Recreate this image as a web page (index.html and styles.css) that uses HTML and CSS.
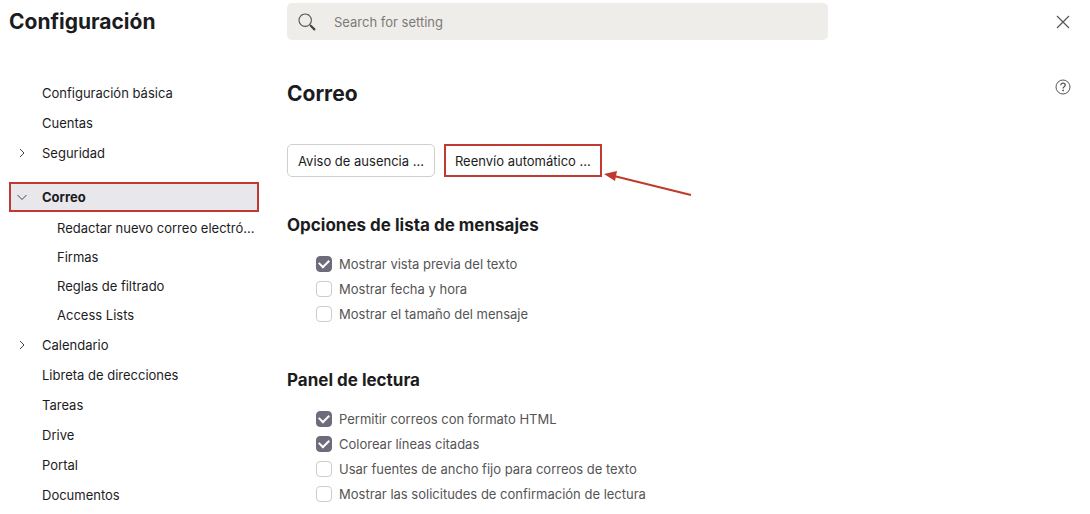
FILE: index.html
```html
<!DOCTYPE html>
<html lang="es">
<head>
  <meta charset="UTF-8">
  <meta name="viewport" content="width=device-width, initial-scale=1.0">
  <title>Configuración</title>
  <link rel="stylesheet" href="styles.css">
</head>
<body>
  <!-- Cabecera -->
  <header class="header">
    <h1 class="title">Configuración</h1>
    <div class="search">
      <svg class="search-icon" viewBox="0 0 18 18" aria-hidden="true">
        <circle cx="7.2" cy="7.2" r="6.2" fill="none" stroke="#555" stroke-width="1.1"/>
        <path d="M11.7 11.7L13 13" stroke="#555" stroke-width="1.2"/>
        <path d="M13 13L16.4 16.4" stroke="#444" stroke-width="2.2" stroke-linecap="round"/>
      </svg>
      <input type="text" class="search-input" placeholder="Search for setting" aria-label="Search for setting">
    </div>
    <button class="icon-btn" aria-label="Cerrar">
      <svg viewBox="0 0 16 16"><path d="M2 2l12 12M14 2L2 14" fill="none" stroke="#555" stroke-width="1.2"/></svg>
    </button>
  </header>

  <div class="layout">
    <!-- Menú lateral -->
    <nav class="sidebar">
      <ul class="menu">
        <li><a href="#" class="item">Configuración básica</a></li>
        <li><a href="#" class="item">Cuentas</a></li>
        <li><a href="#" class="item"><svg class="chevron" viewBox="0 0 10 10"><path d="M3 1l4 4-4 4"/></svg>Seguridad</a></li>
      </ul>
      <ul class="menu">
        <li>
          <a href="#" class="item active"><svg class="chevron" viewBox="0 0 10 10"><path d="M0.5 3L5 7.5 9.5 3"/></svg>Correo</a>
          <ul class="submenu">
            <li><a href="#" class="subitem">Redactar nuevo correo electró...</a></li>
            <li><a href="#" class="subitem">Firmas</a></li>
            <li><a href="#" class="subitem">Reglas de filtrado</a></li>
            <li><a href="#" class="subitem">Access Lists</a></li>
          </ul>
        </li>
        <li><a href="#" class="item"><svg class="chevron" viewBox="0 0 10 10"><path d="M3 1l4 4-4 4"/></svg>Calendario</a></li>
        <li><a href="#" class="item">Libreta de direcciones</a></li>
        <li><a href="#" class="item">Tareas</a></li>
        <li><a href="#" class="item">Drive</a></li>
        <li><a href="#" class="item">Portal</a></li>
        <li><a href="#" class="item">Documentos</a></li>
      </ul>
    </nav>

    <!-- Contenido -->
    <main class="content">
      <div class="content-head">
        <h2 class="title">Correo</h2>
        <button class="icon-btn" aria-label="Ayuda">
          <svg viewBox="0 0 16 16" fill="none" stroke="#555">
            <circle cx="8" cy="8" r="7"/>
            <path d="M5.8 6.3c0-1.3 1-2.1 2.2-2.1s2.2.8 2.2 2c0 1.5-2.1 1.6-2.1 3.2" stroke-width="1.3"/>
            <circle cx="8.1" cy="11.4" r=".9" fill="#555" stroke="none"/>
          </svg>
        </button>
      </div>

      <div class="actions">
        <button class="btn">Aviso de ausencia ...</button>
        <div class="marked">
          <button class="btn btn-marked">Reenvío automático ...</button>
          <svg class="arrow" viewBox="0 0 90 28" aria-hidden="true">
            <path d="M12 6L89 25" stroke="#bf3a2b" stroke-width="2"/>
            <path d="M2 4L15 1L13 11Z" fill="#bf3a2b"/>
          </svg>
        </div>
      </div>

      <fieldset class="group">
        <legend>Opciones de lista de mensajes</legend>
        <label class="check"><input type="checkbox" checked>Mostrar vista previa del texto</label>
        <label class="check"><input type="checkbox">Mostrar fecha y hora</label>
        <label class="check"><input type="checkbox">Mostrar el tamaño del mensaje</label>
      </fieldset>

      <fieldset class="group">
        <legend>Panel de lectura</legend>
        <label class="check"><input type="checkbox" checked>Permitir correos con formato HTML</label>
        <label class="check"><input type="checkbox" checked>Colorear líneas citadas</label>
        <label class="check"><input type="checkbox">Usar fuentes de ancho fijo para correos de texto</label>
        <label class="check"><input type="checkbox">Mostrar las solicitudes de confirmación de lectura</label>
      </fieldset>
    </main>
  </div>
</body>
</html>
```
FILE: styles.css
```css
* {
  box-sizing: border-box;
}
body {
  margin: 0;
  padding: 3px 19px 0 9px;
  font-family: Inter, "Liberation Sans", sans-serif;
  font-size: 13px;
  line-height: 20px;
  color: #1c1c1e;
  background: #fff;
}
button, input {
  font: inherit;
  color: inherit;
}
ul {
  list-style: none;
  margin: 0;
  padding: 0;
}
.title {
  margin: 0;
  font-size: 21px;
  line-height: 36px;
  font-weight: 700;
}
/* Cabecera */
.header {
  display: grid;
  grid-template-columns: 250px minmax(0, 541px) 1fr;
  column-gap: 28px;
  align-items: center;
}
.search {
  display: flex;
  align-items: center;
  gap: 18px;
  height: 37px;
  padding: 0 11px;
  border-radius: 5px;
  background: #efedea;
}
.search-icon {
  width: 18px;
  height: 18px;
}
.search-input {
  flex: 1;
  min-width: 0;
  padding: 0;
  border: none;
  outline: none;
  background: none;
}
.search-input::placeholder {
  color: #7c7a77;
  opacity: 1;
}
.icon-btn {
  display: block;
  width: 16px;
  height: 16px;
  margin-left: auto;
  padding: 0;
  border: none;
  background: none;
  cursor: pointer;
}
.icon-btn svg {
  display: block;
}
.layout {
  display: grid;
  grid-template-columns: 250px minmax(0, 1fr);
  column-gap: 28px;
  padding-top: 36px;
}
/* Menú lateral */
.sidebar {
  display: flex;
  flex-direction: column;
  gap: 14px;
  padding-top: 2px;
}
.item, .subitem {
  display: flex;
  align-items: center;
  height: 30px;
  padding-left: 33px;
  color: inherit;
  text-decoration: none;
}
.chevron {
  width: 10px;
  height: 10px;
  margin: 0 15px 0 -25px;
  fill: none;
  stroke: #444;
}
.active {
  font-weight: 700;
  background: #e8e7ec;
  outline: 2px solid #bf3a32;
  outline-offset: -2px;
}
.submenu {
  padding: 1px 0;
}
.subitem {
  height: 29px;
  padding-left: 48px;
  white-space: nowrap;
}
/* Contenido */
.content-head {
  display: flex;
  align-items: flex-start;
  justify-content: space-between;
}
.content-head .icon-btn {
  margin-top: 3px;
}
.actions {
  display: flex;
  gap: 9px;
  padding-top: 32px;
}
.btn {
  height: 33px;
  padding: 0 10px;
  border: 1px solid #cfcfcf;
  border-radius: 5px;
  background: #fff;
  cursor: pointer;
}
.marked {
  position: relative;
}
.btn-marked {
  padding: 0 9px;
  border: 2px solid #bf3a32;
  border-radius: 0;
}
/* Flecha sobre el botón de reenvío */
.arrow {
  position: absolute;
  left: 100%;
  top: 26px;
  width: 90px;
  height: 28px;
}
.group {
  min-width: 0;
  margin: 0;
  padding: 38px 0 6px;
  border: none;
}
.group legend {
  float: left;
  width: 100%;
  padding: 0 0 16px;
  font-size: 17px;
  line-height: 20px;
  font-weight: 700;
}
.check {
  clear: both;
  display: flex;
  align-items: center;
  gap: 7px;
  height: 25px;
  padding-left: 29px;
  color: #555;
}
.check input {
  appearance: none;
  width: 16px;
  height: 16px;
  margin: 0;
  border: 1px solid #ccc;
  border-radius: 4px;
  background: #fff;
}
.check input:checked {
  display: grid;
  place-items: center;
  border-color: #6e6b7b;
  background: #6e6b7b;
}
.check input:checked::before {
  content: "";
  width: 8px;
  height: 5px;
  margin-bottom: 2px;
  border: solid #fff;
  border-width: 0 0 2px 2px;
  transform: rotate(-45deg);
}
```
